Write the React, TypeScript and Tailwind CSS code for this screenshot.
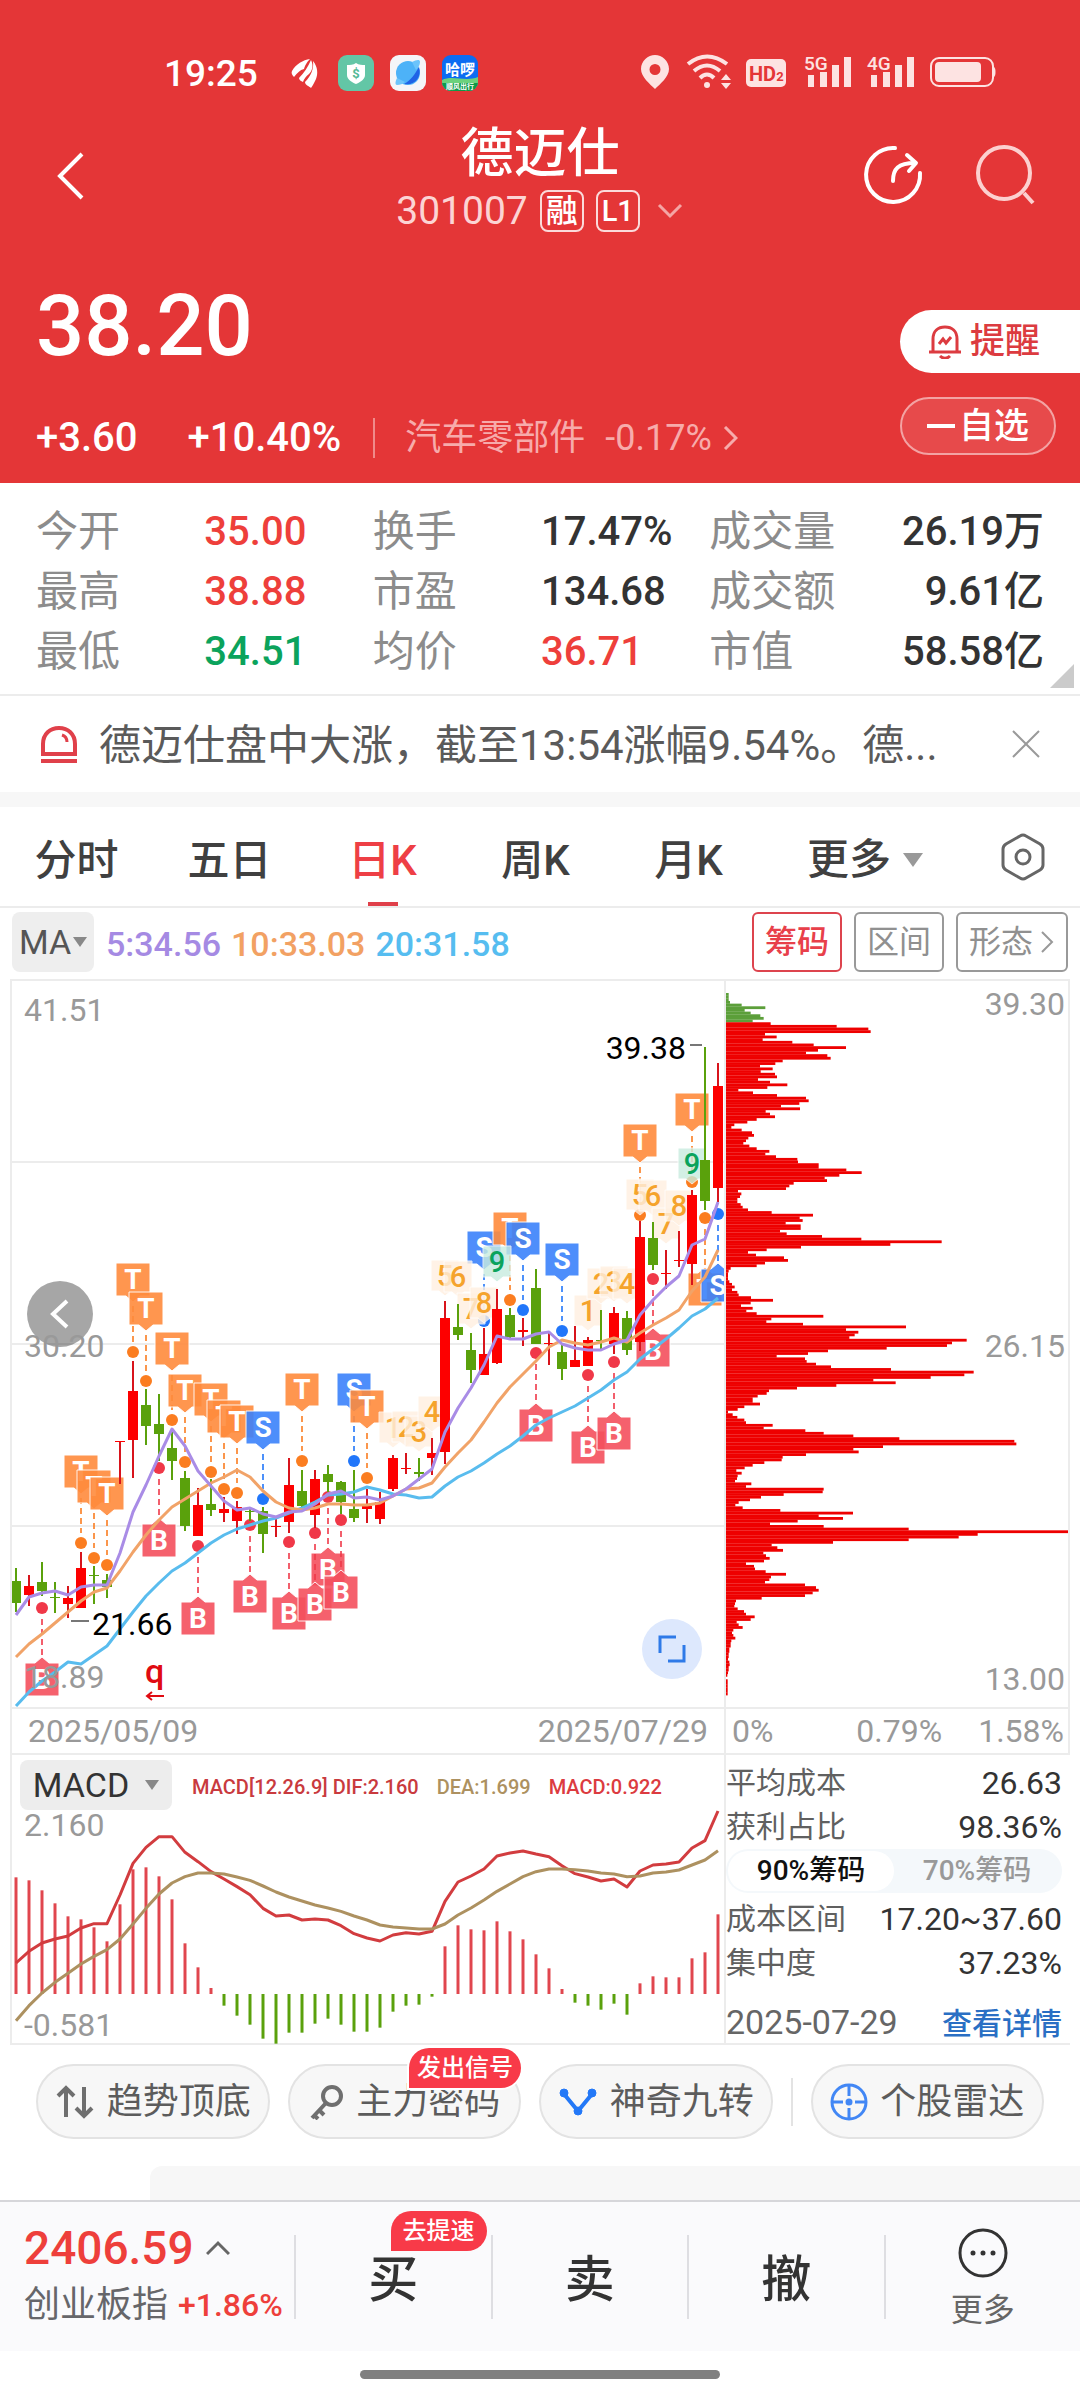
import { useState } from 'react';
import type { ReactNode } from 'react';
import clsx from 'clsx';

type Tone = 'up' | 'down' | 'plain';

const QUOTE_ROWS: { label: string; value: string; tone: Tone }[][] = [
  [
    { label: '今开', value: '35.00', tone: 'up' },
    { label: '换手', value: '17.47%', tone: 'plain' },
    { label: '成交量', value: '26.19万', tone: 'plain' },
  ],
  [
    { label: '最高', value: '38.88', tone: 'up' },
    { label: '市盈', value: '134.68', tone: 'plain' },
    { label: '成交额', value: '9.61亿', tone: 'plain' },
  ],
  [
    { label: '最低', value: '34.51', tone: 'down' },
    { label: '均价', value: '36.71', tone: 'up' },
    { label: '市值', value: '58.58亿', tone: 'plain' },
  ],
];

const TONE_CLASS: Record<Tone, string> = {
  up: 'text-[#ee3f3b]',
  down: 'text-[#0ba35c]',
  plain: 'text-[#333333]',
};

const PERIODS = ['分时', '五日', '日K', '周K', '月K'];

// direction, high, low, body top, body bottom
type Candle = ['r' | 'g', number, number, number, number];

const CANDLES: Candle[] = [
  ['g', 588, 632, 601, 623],
  ['r', 595, 626, 606, 615],
  ['g', 582, 616, 602, 611],
  ['g', 602, 633, 617, 618],
  ['r', 606, 638, 618, 624],
  ['r', 572, 628, 588, 628],
  ['g', 586, 624, 595, 596],
  ['g', 594, 618, 600, 607],
  ['r', 461, 504, 461, 462],
  ['r', 381, 498, 411, 460],
  ['g', 409, 465, 425, 446],
  ['g', 414, 481, 444, 454],
  ['g', 449, 500, 468, 481],
  ['g', 491, 551, 498, 546],
  ['r', 508, 556, 525, 556],
  ['g', 499, 536, 524, 530],
  ['r', 517, 542, 529, 533],
  ['r', 521, 554, 527, 541],
  ['g', 527, 541, 531, 532],
  ['g', 527, 573, 531, 554],
  ['r', 536, 557, 546, 547],
  ['r', 478, 553, 505, 542],
  ['g', 490, 529, 511, 526],
  ['r', 490, 548, 499, 535],
  ['g', 485, 512, 494, 502],
  ['g', 501, 534, 502, 522],
  ['g', 490, 542, 529, 538],
  ['r', 509, 543, 526, 529],
  ['r', 512, 544, 522, 539],
  ['r', 475, 511, 478, 509],
  ['r', 473, 494, 488, 489],
  ['g', 478, 501, 492, 494],
  ['r', 458, 495, 473, 478],
  ['r', 321, 484, 338, 472],
  ['g', 324, 360, 347, 355],
  ['g', 353, 403, 370, 390],
  ['r', 348, 395, 374, 395],
  ['r', 309, 384, 329, 383],
  ['g', 328, 358, 335, 357],
  ['r', 338, 366, 350, 352],
  ['g', 289, 364, 308, 364],
  ['r', 353, 385, 363, 364],
  ['g', 364, 400, 372, 389],
  ['r', 346, 387, 380, 387],
  ['r', 357, 386, 360, 386],
  ['g', 330, 369, 360, 361],
  ['r', 327, 374, 333, 364],
  ['g', 331, 375, 338, 370],
  ['r', 241, 371, 257, 362],
  ['g', 242, 290, 258, 285],
  ['r', 270, 309, 293, 294],
  ['r', 251, 287, 280, 281],
  ['r', 210, 305, 215, 284],
  ['g', 67, 230, 180, 221],
  ['r', 83, 222, 106, 208],
];

const MA5 = [
  635, 617, 613, 611, 615, 607, 605, 605, 573, 532, 505, 476, 449, 466, 491, 506, 521, 530, 528,
  534, 537, 532, 531, 524, 514, 511, 518, 517, 520, 516, 509, 499, 489, 452, 428, 408, 385, 356,
  359, 359, 354, 352, 364, 368, 370, 370, 364, 360, 335, 320, 307, 296, 265, 259, 222,
];
const MA10 = [
  677, 664, 654, 643, 632, 621, 612, 608, 591, 572, 555, 540, 527, 519, 511, 503, 497, 490, 497,
  511, 522, 528, 530, 528, 524, 524, 525, 525, 523, 516, 509, 508, 503, 487, 473, 460, 442, 423,
  407, 394, 381, 367, 360, 363, 365, 362, 358, 362, 353, 345, 338, 330, 311, 297, 270,
];
const MA20 = [
  726, 712, 701, 692, 682, 684, 675, 666, 649, 632, 616, 603, 591, 583, 573, 563, 555, 549, 545,
  541, 538, 533, 528, 522, 515, 514, 512, 507, 510, 514, 515, 518, 517, 506, 497, 491, 483, 474,
  466, 456, 445, 438, 432, 426, 418, 410, 400, 392, 379, 369, 359, 348, 336, 329, 318,
];

// kind, candle index, top of the flag, centre of the dot
type Signal = ['T' | 'S' | 'B', number, number, number];

const SIGNALS: Signal[] = [
  ['T', 5, 475, 563],
  ['T', 6, 490, 578],
  ['T', 7, 497, 585],
  ['T', 9, 283, 372],
  ['T', 10, 312, 401],
  ['T', 12, 352, 440],
  ['T', 13, 394, 482],
  ['T', 15, 403, 492],
  ['T', 16, 420, 509],
  ['T', 17, 425, 513],
  ['S', 19, 431, 519],
  ['T', 22, 393, 481],
  ['S', 26, 393, 481],
  ['T', 27, 410, 498],
  ['S', 36, 251, 341],
  ['T', 38, 232, 320],
  ['S', 39, 242, 330],
  ['S', 42, 263, 351],
  ['T', 48, 144, 235],
  ['T', 52, 113, 202],
  ['B', 2, 683, 628],
  ['B', 11, 544, 488],
  ['B', 14, 622, 566],
  ['B', 18, 600, 545],
  ['B', 21, 617, 562],
  ['B', 24, 573, 517],
  ['B', 23, 608, 553],
  ['B', 25, 596, 540],
  ['B', 40, 429, 373],
  ['B', 44, 451, 395],
  ['B', 46, 437, 382],
  ['B', 49, 354, 299],
  ['T', 53, 293, 238],
  ['S', 54, 289, 234],
];

const NINE_TURNS: [string, number, number][] = [
  ['1', 29, 432],
  ['2', 30, 431],
  ['3', 31, 436],
  ['4', 32, 416],
  ['5', 33, 280],
  ['6', 34, 281],
  ['7', 35, 313],
  ['8', 36, 307],
  ['9', 37, 266],
  ['1', 44, 315],
  ['2', 45, 288],
  ['3', 46, 286],
  ['4', 47, 288],
  ['5', 48, 199],
  ['6', 49, 200],
  ['7', 50, 228],
  ['8', 51, 210],
  ['9', 52, 168],
];

const SIGNAL_FLAG = { T: '#ff8b3d', S: '#3b82fb', B: '#f4505e' };
const SIGNAL_DOT = { T: '#fb7d20', S: '#2176fa', B: '#f03848' };

// Holding distribution, top price first; the first eleven rows are above the current price.
const CHIPS = [
  8, 8, 8, 12, 47, 118, 56, 74, 103, 113, 80, 134, 332, 427, 434, 117, 152, 110, 199, 263, 360, 276,
  240, 304, 314, 170, 148, 102, 140, 104, 147, 153, 96, 132, 184, 124, 37, 81, 153, 240, 248, 220,
  165, 222, 119, 132, 147, 92, 64, 25, 16, 47, 78, 84, 67, 60, 52, 70, 92, 130, 118, 150, 214, 216,
  278, 278, 361, 407, 340, 296, 303, 203, 190, 180, 36, 46, 42, 34, 34, 44, 50, 66, 137, 261, 221,
  230, 179, 224, 224, 162, 182, 288, 406, 647, 493, 225, 122, 66, 90, 174, 186, 117, 92, 14, 8, 6, 6,
  6, 10, 18, 26, 18, 34, 38, 75, 141, 74, 45, 80, 61, 92, 292, 136, 121, 231, 540, 360, 397, 386,
  370, 722, 678, 663, 482, 306, 246, 152, 237, 242, 270, 315, 495, 743, 715, 614, 442, 509, 331, 213,
  129, 122, 95, 80, 80, 102, 55, 35, 6, 20, 34, 55, 60, 140, 113, 238, 293, 382, 520, 865, 871, 471,
  382, 398, 240, 170, 167, 115, 80, 56, 31, 47, 35, 33, 27, 76, 60, 293, 290, 173, 105, 72, 38, 28,
  50, 163, 381, 278, 351, 215, 132, 293, 548, 1032, 755, 698, 548, 321, 137, 154, 171, 112, 120, 131,
  114, 60, 84, 87, 119, 180, 135, 130, 117, 237, 270, 278, 260, 237, 107, 30, 27, 25, 35, 54, 60, 86,
  74, 32, 38, 50, 22, 18, 22, 28, 16, 14, 14, 10, 10, 8, 8, 6, 10, 11, 8, 8, 6, 4, 0, 5, 5, 5, 5, 5,
  5,
];
const CHIPS_ABOVE = 11;

// MACD series share one scale: three steps to a pixel, zero line at 765.
const HISTOGRAM = [
  415, 424, 454, 493, 532, 541, 565, 607, 496, 391, 385, 412, 481, 613, 685, 747, 800, 830, 857,
  899, 914, 881, 881, 854, 839, 857, 878, 878, 866, 818, 800, 797, 773, 622, 559, 571, 574, 547, 577,
  601, 646, 688, 750, 791, 800, 812, 794, 827, 733, 712, 715, 715, 658, 640, 526,
];
const DIF = [
  672, 637, 612, 600, 591, 567, 554, 554, 468, 373, 325, 293, 293, 340, 368, 398, 420, 443, 467,
  508, 531, 528, 543, 540, 543, 560, 584, 597, 606, 588, 581, 585, 577, 487, 429, 411, 390, 351, 342,
  336, 345, 353, 380, 404, 414, 426, 420, 444, 396, 378, 375, 369, 327, 305, 216,
];
const DEA = [
  845, 800, 762, 730, 703, 675, 652, 632, 600, 555, 508, 465, 432, 413, 402, 402, 405, 414, 424,
  441, 459, 474, 486, 498, 507, 517, 531, 543, 558, 564, 567, 570, 570, 555, 528, 507, 483, 457, 435,
  413, 398, 390, 390, 392, 396, 402, 405, 413, 411, 402, 399, 393, 378, 363, 335,
];
const MACD_ZERO = 765;

const candleX = (index: number) => 6 + index * 13;
const macdY = (level: number) => level / 3 - 16;
const toPoints = (values: number[], y = (value: number) => value) =>
  values.map((value, index) => `${candleX(index)},${y(value)}`).join(' ');

function StatusBar() {
  return (
    <div className="flex h-[50px] items-center justify-between pr-[84px] pl-[164px]">
      <div className="flex items-center">
        <span className="text-[37px] leading-none font-medium">19:25</span>
        <svg className="ml-8 h-8 w-8" viewBox="0 0 32 32" fill="#fff">
          <path d="M2 14C6 7 13 3 20 2C16 6 15 9 14 12C10 13 7 16 4 20C2 18 1 16 2 14Z" />
          <path d="M9 21C14 16 18 10 21 3C24 9 22 14 19 17C16 19 14 22 13 25C11 24 9 23 9 21Z" />
          <path d="M15 25C21 19 24 12 23 4C28 10 28 17 26 22C24 26 23 28 21 31C19 29 15 28 15 25Z" />
        </svg>
        <svg className="ml-4 h-9 w-9" viewBox="0 0 36 36">
          <rect width="36" height="36" rx="9" fill="#63c6a6" />
          <path d="M18 8C21 10 24 10 27 10V20C27 24 23 27 18 29C13 27 9 24 9 20V10C12 10 15 10 18 8Z" fill="#fff" />
          <text x="18" y="23" textAnchor="middle" fontSize="13" fontWeight="700" fill="#54b996">
            $
          </text>
        </svg>
        <svg className="ml-4 h-9 w-9" viewBox="0 0 36 36">
          <rect width="36" height="36" rx="9" fill="#f4f5f8" />
          <circle cx="18" cy="18" r="12" fill="#4db2f8" />
          <path d="M29 12C32 22 25 31 14 29C21 25 25 19 29 12Z" fill="#1f63e6" />
          <path d="M22 7C26 5 30 4 30 7C30 10 28 13 26 15ZM7 23C5 27 5 30 7 30C10 30 13 29 15 27Z" fill="#6cc4fb" />
        </svg>
        <svg className="ml-4 h-9 w-9" viewBox="0 0 36 36">
          <defs>
            <clipPath id="ride-app">
              <rect width="36" height="36" rx="9" />
            </clipPath>
          </defs>
          <g clipPath="url(#ride-app)">
            <rect width="36" height="36" fill="#0c6cf2" />
            <path d="M0 25C10 20 24 27 36 22V36H0Z" fill="#6bd17c" />
            <path d="M0 28H36V36H0Z" fill="#0d9a48" />
          </g>
          <text x="18" y="20" textAnchor="middle" fontSize="15" fontWeight="700" fill="#fff">
            哈啰
          </text>
          <text x="18" y="34" textAnchor="middle" fontSize="7" fontWeight="700" fill="#fff">
            顺风出行
          </text>
        </svg>
      </div>
      <svg className="h-10 w-[356px]" viewBox="0 0 356 40" fill="#fde3e2">
        <path
          fillRule="evenodd"
          d="M15 2C22 2 29 8 29 16C29 24 20 31 15 36C10 31 1 24 1 16C1 8 8 2 15 2ZM15 11A5.500 5.500 0 1 0 15 22A5.500 5.500 0 1 0 15 11Z"
        />
        <g fill="none" stroke="#fde3e2" strokeWidth="4">
          <path d="M48 11Q67 -4 87 11" />
          <path d="M54 18Q67 7 80 18" />
          <path d="M60 25Q67 18 74 25" />
        </g>
        <circle cx="67" cy="32" r="3" />
        <path d="M86 21L91 27H81ZM86 36L91 30H81Z" />
        <rect x="106" y="6" width="40" height="28" rx="5" />
        <text x="109" y="28" fontSize="20" fontWeight="700" fill="#e43637">
          HD<tspan fontSize="13">2</tspan>
        </text>
        <text x="164" y="17" fontSize="19" fontWeight="500">
          5G
        </text>
        <path d="M168 22H174V34H168ZM180 19H187V34H180ZM192 12H199V34H192ZM204 4H211V34H204Z" />
        <text x="227" y="17" fontSize="19" fontWeight="500">
          4G
        </text>
        <path d="M231 22H237V34H231ZM243 19H250V34H243ZM255 12H262V34H255ZM267 4H274V34H267Z" />
        <rect x="291" y="5" width="62" height="28" rx="8" fill="none" stroke="#fde3e2" strokeWidth="2" />
        <rect x="295" y="9" width="46" height="20" rx="4" />
        <path d="M354 14C356 15 356 23 354 24Z" />
      </svg>
    </div>
  );
}

function StockHeader() {
  return (
    <header className="bg-[#e43637] pt-12 pb-5 text-white">
      <StatusBar />
      <div className="mt-6 flex items-start justify-between px-11">
        <div className="flex w-[200px] pt-[18px]">
          <button type="button" aria-label="返回" className="p-3">
            <svg className="h-12 w-7" viewBox="0 0 28 48" fill="none" stroke="#fff" strokeWidth="4">
              <path d="M26 2L4 24L26 46" />
            </svg>
          </button>
        </div>
        <div className="flex flex-col items-center">
          <h1 className="pt-0.5 text-[53px] leading-[60px] font-medium">德迈仕</h1>
          <div className="mt-1.5 flex h-[42px] items-center">
            <span className="text-[39px] leading-none text-[#fcd4d4]">301007</span>
            <span className="ml-3 flex h-[42px] w-11 items-center justify-center rounded-lg border-2 border-[#fbdada] text-[32px] leading-none font-medium">
              融
            </span>
            <span className="ml-3 flex h-[42px] w-11 items-center justify-center rounded-lg border-2 border-[#fbdada] text-[29px] leading-none font-medium">
              L1
            </span>
            <svg className="ml-4 h-4 w-7" viewBox="0 0 28 16" fill="none" stroke="#f4a5a4" strokeWidth="3">
              <path d="M3 2L14 13L25 2" />
            </svg>
          </div>
        </div>
        <div className="flex w-[200px] justify-end gap-[50px] pt-[22px]">
          <button type="button" aria-label="分享">
            <svg className="h-[62px] w-[62px]" viewBox="0 0 62 62" fill="none" stroke="#fff" strokeWidth="4">
              <path d="M33 4A27 27 0 1 0 58 29" strokeLinecap="round" />
              <path d="M31 37C31 25 36 19 53 19" strokeLinecap="round" />
              <path d="M45 11L54 19L47 27" strokeLinecap="round" strokeLinejoin="round" />
            </svg>
          </button>
          <button type="button" aria-label="搜索">
            <svg className="h-[62px] w-[62px]" viewBox="0 0 62 62" fill="none" stroke="#fcd0cf" strokeWidth="4">
              <circle cx="30" cy="29" r="26" />
              <path d="M50 49L59 59" />
            </svg>
          </button>
        </div>
      </div>

      <div className="flex justify-between">
        <div className="pt-[51px] pl-9">
          <p className="text-[85px] leading-[86px] font-medium">38.20</p>
          <div className="mt-11 flex h-[50px] items-center text-[40px] leading-none font-medium">
            <span>+3.60</span>
            <span className="ml-[50px]">+10.40%</span>
            <span className="ml-8 h-10 w-0.5 bg-[#f08a8a]" />
            <a href="#sector" className="ml-[30px] flex items-center text-[36px] font-normal text-[#f7abab]">
              <span>汽车零部件</span>
              <span className="ml-5">-0.17%</span>
              <svg className="ml-2.5 h-6 w-4" viewBox="0 0 16 24" fill="none" stroke="#f7abab" strokeWidth="3">
                <path d="M3 1L14 12L3 23" />
              </svg>
            </a>
          </div>
        </div>
        <div className="flex w-[180px] flex-col gap-6 pt-[78px]">
          <button
            type="button"
            className="flex h-[63px] items-center gap-2 rounded-l-full bg-white pl-7 text-[35px] leading-none font-medium text-[#dc3b40]"
          >
            <svg className="h-[34px] w-[34px]" viewBox="0 0 34 34" fill="none" stroke="#dc3b40" strokeWidth="3">
              <path d="M5 26V14C5 6 10 2 17 2C24 2 29 6 29 14V26M1 27H33" />
              <path d="M11 19L15 14L18 18L23 12" />
              <path d="M12 31C15 34 19 34 22 31" />
            </svg>
            提醒
          </button>
          <button
            type="button"
            className="flex h-[58px] w-[156px] items-center justify-center gap-1 rounded-full border-2 border-[#f3a3a3] bg-white/10 text-[35px] leading-none font-medium"
          >
            <span className="h-1 w-7 bg-white" />
            自选
          </button>
        </div>
      </div>
    </header>
  );
}

function QuoteGrid() {
  return (
    <section className="relative border-b-2 border-[#ececec] pt-[19px] pb-3">
      <dl>
        {QUOTE_ROWS.map((row) => (
          <div
            key={row[0].label}
            className="grid h-[60px] grid-cols-[168fr_168fr_168fr_168fr_334fr] items-center pr-9 pl-9 text-[42px] leading-none text-[#8c8c8c]"
          >
            {row.map((item, index) =>
              index === 2 ? (
                <div key={item.label} className="flex items-center justify-between">
                  <dt>{item.label}</dt>
                  <dd className={clsx('text-[40px] font-medium', TONE_CLASS[item.tone])}>{item.value}</dd>
                </div>
              ) : (
                <div key={item.label} className="contents">
                  <dt>{item.label}</dt>
                  <dd className={clsx('text-[40px] font-medium', TONE_CLASS[item.tone])}>{item.value}</dd>
                </div>
              ),
            )}
          </div>
        ))}
      </dl>
      <svg className="absolute right-1.5 bottom-1.5 h-6 w-6" viewBox="0 0 24 24" fill="#cbcbcb">
        <path d="M24 0V24H0Z" />
      </svg>
    </section>
  );
}

function NoticeBar() {
  return (
    <section className="flex h-24 items-center pr-10 pl-10">
      <svg className="h-[38px] w-[38px] shrink-0" viewBox="0 0 38 38" fill="none" stroke="#e0404a" strokeWidth="4">
        <path d="M3 29V19C3 9 10 3 19 3C28 3 35 9 35 19V29Z" />
        <path d="M1 36H37" />
        <path d="M22 10C25 11 27 13 27 17" strokeWidth="3" />
      </svg>
      <p className="ml-[21px] truncate pt-1 text-[42px] leading-[60px] text-[#5a5a5a]">
        德迈仕盘中大涨，截至13:54涨幅9.54%。德...
      </p>
      <button type="button" aria-label="关闭" className="ml-auto">
        <svg className="h-7 w-7" viewBox="0 0 28 28" fill="none" stroke="#9a9a9a" strokeWidth="2">
          <path d="M1 1L27 27M27 1L1 27" />
        </svg>
      </button>
    </section>
  );
}

function PeriodTabs() {
  const [period, setPeriod] = useState('日K');

  return (
    <nav className="grid h-[101px] grid-cols-[153fr_153fr_153fr_153fr_153fr_200fr_115fr] border-b-2 border-[#ececec] text-[42px] leading-none font-medium text-[#404040]">
      {PERIODS.map((name) => (
        <button
          key={name}
          type="button"
          onClick={() => {
            setPeriod(name);
          }}
          className={clsx(
            'flex flex-col items-center justify-end',
            period === name && 'text-[#ee3f45]',
          )}
        >
          <span className="mb-5">{name}</span>
          <span className={clsx('h-1 w-[30px]', period === name && 'bg-[#e0404a]')} />
        </button>
      ))}
      <button type="button" className="flex items-center justify-center gap-3 pt-1.5">
        更多
        <svg className="h-3.5 w-5" viewBox="0 0 20 14" fill="#999">
          <path d="M0 0H20L10 14Z" />
        </svg>
      </button>
      <button type="button" aria-label="设置" className="flex items-center justify-center">
        <svg className="h-12 w-11" viewBox="0 0 44 48" fill="none" stroke="#666" strokeWidth="3">
          <path d="M19 3Q22 1 25 3L39 11Q42 13 42 16V32Q42 35 39 37L25 45Q22 47 19 45L5 37Q2 35 2 32V16Q2 13 5 11Z" />
          <circle cx="22" cy="24" r="7" />
        </svg>
      </button>
    </nav>
  );
}

function ChipButton({ active, children }: { active?: boolean; children: ReactNode }) {
  return (
    <button
      type="button"
      className={clsx(
        'flex h-[60px] items-center gap-1.5 rounded-md border-2 px-[11px] text-[32px] leading-none',
        active ? 'border-[#dd444e] font-medium text-[#e8404a]' : 'border-[#999999] text-[#909090]',
      )}
    >
      {children}
    </button>
  );
}

function MovingAverageBar() {
  return (
    <div className="flex h-[71px] items-center justify-between px-3 pb-1">
      <div className="flex items-center gap-3 text-[34px] leading-none">
        <button type="button" className="flex h-[60px] w-[82px] items-center justify-center gap-0.5 rounded-lg bg-[#eeeeee] text-[#555555]">
          MA
          <svg className="h-2.5 w-3.5" viewBox="0 0 14 10" fill="#888">
            <path d="M0 0H14L7 10Z" />
          </svg>
        </button>
        <div className="flex gap-2.5 pt-1 font-medium">
          <span className="text-[#a58ae3]">5:34.56</span>
          <span className="text-[#f2a163]">10:33.03</span>
          <span className="text-[#56bdf0]">20:31.58</span>
        </div>
      </div>
      <div className="flex items-center gap-3">
        <ChipButton active>筹码</ChipButton>
        <ChipButton>区间</ChipButton>
        <ChipButton>
          形态
          <svg className="h-6 w-4" viewBox="0 0 16 24" fill="none" stroke="#999" strokeWidth="2">
            <path d="M3 2L13 12L3 22" />
          </svg>
        </ChipButton>
      </div>
    </div>
  );
}

function SignalFlag({ signal: [kind, index, top, dot] }: { signal: Signal }) {
  const x = candleX(index);
  const below = top > dot;
  const box = below
    ? `M${x - 17} ${top}H${x - 7}L${x} ${top - 6}L${x + 7} ${top}H${x + 17}V${top + 33}H${x - 17}Z`
    : `M${x - 17} ${top}H${x + 17}V${top + 33}H${x + 7}L${x} ${top + 39}L${x - 7} ${top + 33}H${x - 17}Z`;

  return (
    <g>
      <path
        d={below ? `M${x} ${dot + 11}V${top - 8}` : `M${x} ${top + 43}V${dot - 10}`}
        stroke={SIGNAL_DOT[kind]}
        strokeWidth="2"
        strokeDasharray="6 4"
        opacity="0.8"
      />
      <path d={box} fill={SIGNAL_FLAG[kind]} stroke="#fff" strokeWidth="1" opacity="0.9" />
      <text x={x} y={top + 26} textAnchor="middle" fontSize="28" fontWeight="700" fill="#fff">
        {kind}
      </text>
      <circle cx={x} cy={dot} r="6" fill={SIGNAL_DOT[kind]} />
    </g>
  );
}

function CandleChart() {
  return (
    <svg className="block w-full" viewBox="2 1 712 726" role="img" aria-label="日K线图">
      <path d="M2 182H714M2 364H714M2 546H714" stroke="#ececec" strokeWidth="2" />
      {SIGNALS.map((signal) => (
        <SignalFlag key={`${signal[0]}${signal[1]}`} signal={signal} />
      ))}
      {NINE_TURNS.map(([step, index, top]) => {
        const x = candleX(index);
        const last = step === '9';
        return (
          <g key={index}>
            <path
              d={`M${x - 14} ${top}H${x + 14}V${top + 31}H${x + 6}L${x} ${top + 36}L${x - 6} ${top + 31}H${x - 14}Z`}
              fill={last ? '#c9ecdf' : '#fff0e0'}
              stroke="#fff"
              opacity="0.8"
            />
            <text
              x={x}
              y={top + 26}
              textAnchor="middle"
              fontSize="29"
              fontWeight="500"
              fill={last ? '#0ba35c' : '#f5a32c'}
            >
              {step}
            </text>
          </g>
        );
      })}
      {CANDLES.map(([direction, high, low, top, bottom], index) => {
        const x = candleX(index);
        const rising = direction === 'r';
        return (
          <g key={index} fill={rising ? '#fd0000' : '#5aa10c'}>
            <rect x={x - 1} y={high} width="2" height={low - high} fill={rising ? '#d8141c' : '#5aa10c'} />
            <rect x={x - 5} y={top} width="10" height={bottom - top} />
          </g>
        );
      })}
      <g fill="none" strokeWidth="3" strokeLinejoin="round">
        <polyline points={toPoints(MA20)} stroke="#59bcee" />
        <polyline points={toPoints(MA10)} stroke="#f1a368" />
        <polyline points={toPoints(MA5)} stroke="#a98ce6" />
      </g>
      <path d="M680 65H692M61 641H79" stroke="#777" strokeWidth="2" />
      <g fontSize="32" fill="#000">
        <text x="676" y="79" textAnchor="end">
          39.38
        </text>
        <text x="82" y="655">
          21.66
        </text>
      </g>
      <circle cx="50" cy="334" r="33" fill="#000" opacity="0.35" />
      <path d="M57 321L43 334L57 347" fill="none" stroke="#fff" strokeWidth="4" />
      <g fontSize="32" fill="#999">
        <text x="14" y="41">
          41.51
        </text>
        <text x="14" y="377">
          30.20
        </text>
        <text x="14" y="708">
          18.89
        </text>
      </g>
      <text x="135" y="703" fontSize="34" fontWeight="500" fill="#e00b12">
        q
      </text>
      <path d="M154 716H137M142 712L137 716L142 720" stroke="#e00b12" strokeWidth="2" fill="none" />
      <circle cx="662" cy="669" r="30" fill="#dde8fd" />
      <path d="M666 657H650V673M658 681H674V665" fill="none" stroke="#2f7ae8" strokeWidth="3" />
    </svg>
  );
}

function ChipDistribution() {
  return (
    <svg className="block w-full" viewBox="0 1 342 726" role="img" aria-label="筹码分布">
      {CHIPS.map((length, index) => (
        <rect
          key={index}
          x="0"
          y={13 + index * 2.66}
          width={length / 3}
          height="2.8"
          fill={index < CHIPS_ABOVE ? '#5c9f3a' : '#ee0000'}
        />
      ))}
      <g fontSize="32" fill="#999" textAnchor="end">
        <text x="339" y="35">
          39.30
        </text>
        <text x="339" y="377">
          26.15
        </text>
        <text x="339" y="710">
          13.00
        </text>
      </g>
    </svg>
  );
}

function MacdPanel() {
  return (
    <div>
      <div className="flex h-14 items-center gap-4 pt-1 pl-2 text-[20px] leading-none">
        <button type="button" className="mr-1 flex h-[50px] w-[152px] items-center justify-center gap-4 rounded-lg bg-[#ededed] text-[34px] text-[#333333]">
          MACD
          <svg className="h-2.5 w-3.5" viewBox="0 0 14 10" fill="#888">
            <path d="M0 0H14L7 10Z" />
          </svg>
        </button>
        <div className="flex gap-[18px] pt-1 font-medium">
          <span className="text-[#c93a3e]">MACD[12.26.9] DIF:2.160</span>
          <span className="text-[#ad9160]">DEA:1.699</span>
          <span className="text-[#dc3b40]">MACD:0.922</span>
        </div>
      </div>
      <svg className="block w-full overflow-visible" viewBox="2 56 712 232" role="img" aria-label="MACD指标图">
        {HISTOGRAM.map((level, index) => (
          <path
            key={index}
            d={`M${candleX(index)} ${macdY(MACD_ZERO)}V${macdY(level)}`}
            stroke={level < MACD_ZERO ? '#e0464e' : '#5aa10c'}
            strokeWidth="3"
          />
        ))}
        <g fill="none" strokeWidth="3" strokeLinejoin="round">
          <polyline points={toPoints(DIF, macdY)} stroke="#d23c3f" />
          <polyline points={toPoints(DEA, macdY)} stroke="#ad9160" />
        </g>
        <g fontSize="32" fill="#999">
          <text x="14" y="81">
            2.160
          </text>
          <text x="14" y="281">
            -0.581
          </text>
        </g>
      </svg>
    </div>
  );
}

function InfoRow({ label, value }: { label: string; value: string }) {
  return (
    <div className="flex h-11 items-center justify-between">
      <dt className="text-[30px] text-[#606060]">{label}</dt>
      <dd className="text-[32px] text-[#333333]">{value}</dd>
    </div>
  );
}

function ChipSummary() {
  const [range, setRange] = useState('90%筹码');

  return (
    <div className="flex flex-col pt-1.5 pr-2 leading-none">
      <dl>
        <InfoRow label="平均成本" value="26.63" />
        <InfoRow label="获利占比" value="98.36%" />
      </dl>
      <div className="grid h-11 grid-cols-2 rounded-full bg-[#f4f8fb] p-0.5 text-[28px] font-medium">
        {['90%筹码', '70%筹码'].map((name) => (
          <button
            key={name}
            type="button"
            aria-pressed={range === name}
            onClick={() => {
              setRange(name);
            }}
            className={clsx('rounded-full', range === name ? 'bg-white text-[#111111]' : 'text-[#999999]')}
          >
            {name}
          </button>
        ))}
      </div>
      <dl className="mt-1">
        <InfoRow label="成本区间" value="17.20~37.60" />
        <InfoRow label="集中度" value="37.23%" />
      </dl>
      <div className="mt-4 flex h-[42px] items-center justify-between">
        <span className="text-[34px] text-[#666666]">2025-07-29</span>
        <a href="#detail" className="pt-1 text-[30px] font-medium text-[#2a6fc4]">
          查看详情
        </a>
      </div>
    </div>
  );
}

function ChartSection() {
  return (
    <section className="mx-2.5 grid grid-cols-[716fr_344fr] border-y-2 border-[#ececec]">
      <div className="border-x-2 border-[#ececec]">
        <CandleChart />
        <div className="flex h-12 items-center justify-between border-y-2 border-[#ececec] px-4 text-[32px] leading-none text-[#999999]">
          <span>2025/05/09</span>
          <span>2025/07/29</span>
        </div>
        <MacdPanel />
      </div>
      <div>
        <div className="border-r-2 border-[#ececec]">
          <ChipDistribution />
          <div className="flex h-12 items-center border-y-2 border-[#ececec] pr-1 pl-1.5 text-[32px] leading-none text-[#999999]">
            <span>0%</span>
            <span className="mr-9 ml-auto">0.79%</span>
            <span>1.58%</span>
          </div>
        </div>
        <ChipSummary />
      </div>
    </section>
  );
}

function ToolPill({ icon, label, badge }: { icon: ReactNode; label: string; badge?: string }) {
  return (
    <button
      type="button"
      className="relative flex h-[75px] flex-1 items-center justify-center gap-3 rounded-full border-2 border-[#e3e3e3] bg-[#f7f7f7] text-[36px] leading-none text-[#5c5c5c]"
    >
      {icon}
      {label}
      {badge && (
        <span className="absolute -top-5 -right-1 flex h-11 items-center rounded-full rounded-bl-sm border-2 border-white bg-[#f83a48] px-2 text-[24px] font-medium text-white">
          {badge}
        </span>
      )}
    </button>
  );
}

function ToolRow() {
  return (
    <div className="flex items-center gap-[18px] px-9 pt-[19px]">
      <ToolPill
        label="趋势顶底"
        icon={
          <svg className="h-9 w-10" viewBox="0 0 40 36" fill="none" stroke="#6f6f6f" strokeWidth="4">
            <path d="M11 33V4M3 12L11 4L19 12M29 3V32M21 24L29 32L37 24" />
          </svg>
        }
      />
      <ToolPill
        label="主力密码"
        badge="发出信号"
        icon={
          <svg className="h-9 w-9" viewBox="0 0 36 36" fill="none" stroke="#6f6f6f" strokeWidth="4">
            <circle cx="24" cy="12" r="9" />
            <path d="M18 19L4 34M11 26L16 31M6 31L10 35" />
          </svg>
        }
      />
      <ToolPill
        label="神奇九转"
        icon={
          <svg className="h-9 w-10" viewBox="0 0 40 36" fill="#2378f7" stroke="#2378f7">
            <path d="M6 10L20 27L34 10" fill="none" strokeWidth="4" />
            <circle cx="6" cy="9" r="4" />
            <circle cx="34" cy="9" r="4" />
            <circle cx="20" cy="27" r="4" />
          </svg>
        }
      />
      <span className="h-12 w-0.5 bg-[#e3e3e3]" />
      <ToolPill
        label="个股雷达"
        icon={
          <svg className="h-[38px] w-[38px]" viewBox="0 0 38 38" fill="none" stroke="#4287f5" strokeWidth="3">
            <circle cx="19" cy="19" r="17" />
            <path d="M19 2V13M19 25V36M2 19H13M25 19H36" />
            <circle cx="19" cy="19" r="2" fill="#4287f5" />
          </svg>
        }
      />
    </div>
  );
}

function TradeButton({ label, badge }: { label: string; badge?: string }) {
  return (
    <button
      type="button"
      className="relative flex h-[84px] flex-1 items-center justify-center border-l-2 border-[#dedee2] pt-1.5 text-[50px] leading-none font-medium text-[#333333]"
    >
      {label}
      {badge && (
        <span className="absolute -top-6 right-1 flex h-10 items-center rounded-full rounded-bl-sm bg-[#f83a48] px-3 text-[24px] text-white">
          {badge}
        </span>
      )}
    </button>
  );
}

function TradeBar() {
  return (
    <footer className="flex h-[151px] items-center border-t-2 border-[#d6d6da] bg-[#fafafc]">
      <a href="#index" className="flex w-[294px] flex-col pb-1.5 pl-6 leading-none">
        <span className="flex items-center gap-3 text-[46px] font-medium text-[#ee3f3b]">
          2406.59
          <svg className="h-4 w-6" viewBox="0 0 24 16" fill="none" stroke="#666" strokeWidth="3">
            <path d="M1 14L12 3L23 14" />
          </svg>
        </span>
        <span className="mt-4 flex items-center gap-2.5">
          <span className="text-[36px] text-[#66666a]">创业板指</span>
          <span className="text-[32px] font-medium text-[#ee3f3b]">+1.86%</span>
        </span>
      </a>
      <TradeButton label="买" badge="去提速" />
      <TradeButton label="卖" />
      <TradeButton label="撤" />
      <button
        type="button"
        className="flex h-[84px] flex-1 flex-col items-center justify-center gap-4 border-l-2 border-[#dedee2] text-[32px] leading-none text-[#666666]"
      >
        <svg className="h-[50px] w-[50px] shrink-0" viewBox="0 0 50 50" fill="none" stroke="#333" strokeWidth="3">
          <circle cx="25" cy="25" r="23" />
          <path d="M15 25H15.010M25 25H25.010M35 25H35.010" strokeWidth="5" strokeLinecap="round" />
        </svg>
        更多
      </button>
    </footer>
  );
}

export default function App() {
  return (
    <div className="flex min-h-screen flex-col bg-white font-['Roboto','Noto_Sans_CJK_SC',sans-serif]">
      <StockHeader />
      <QuoteGrid />
      <NoticeBar />
      <div className="h-[15px] bg-[#f7f7f7]" />
      <PeriodTabs />
      <MovingAverageBar />
      <ChartSection />
      <ToolRow />
      <div className="mt-[27px] ml-[150px] h-[34px] rounded-tl-xl bg-[#f7f7f7]" />
      <TradeBar />
      <div className="flex flex-1 items-center justify-center pt-[18px] pb-[21px]">
        <span className="h-[9px] w-1/3 rounded-full bg-[#808080]" />
      </div>
    </div>
  );
}
